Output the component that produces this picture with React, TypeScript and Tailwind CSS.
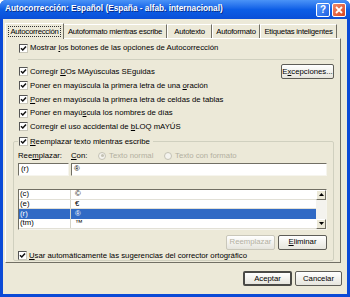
import React from 'react';

const font = "font-['Liberation_Sans',Arial,sans-serif]";

function Check({ checked = true }: { checked?: boolean }) {
  return (
    <span className="w-[9px] h-[9px] shrink-0 bg-white border border-t-[#555] border-l-[#555] border-b-[#c9c7ba] border-r-[#c9c7ba] flex items-center justify-center">
      {checked && (
        <svg width="7" height="7" viewBox="0 0 7 7">
          <path d="M1 3.2 L2.8 5 L6 1.5" stroke="#111" strokeWidth="1.5" fill="none" />
        </svg>
      )}
    </span>
  );
}

function Radio({ on = false }: { on?: boolean }) {
  return (
    <span className="w-[8px] h-[8px] shrink-0 rounded-full border border-[#c4c2b4] bg-[#f4f3ee] flex items-center justify-center">
      {on && <span className="w-[3px] h-[3px] rounded-full bg-[#c4c2b4]" />}
    </span>
  );
}

function CheckRow({ children, h = 'h-[13.75px]' }: { children: React.ReactNode; h?: string }) {
  return (
    <div className={`flex items-center gap-[2px] ${h}`}>
      <Check />
      <span className="leading-none">{children}</span>
    </div>
  );
}

function Btn({ children, w, disabled, isDefault }: { children: React.ReactNode; w: string; disabled?: boolean; isDefault?: boolean }) {
  return (
    <div
      className={`${w} h-[15px] rounded-[2px] flex items-center justify-center leading-none bg-gradient-to-b from-white to-[#e6e5dd] ${
        isDefault ? 'border-2 border-[#4a4a46]' : 'border border-[#5e5d57]'
      } ${disabled ? 'text-[#b3b0a1] border-[#c9c7ba]' : 'text-black'}`}
    >
      {children}
    </div>
  );
}

const rows = [
  { a: '(c)', b: '©' },
  { a: '(e)', b: '€' },
  { a: '(r)', b: '®', sel: true },
  { a: '(tm)', b: '™' },
];

export default function App() {
  return (
    <div className={`w-[350px] h-[297px] bg-[#0b4ad6] rounded-t-[6px] flex flex-col overflow-hidden ${font} text-[7.75px] text-black`}>
      {/* title bar */}
      <div className="h-[19px] shrink-0 flex items-center pl-[5px] pr-[4px] bg-gradient-to-b from-[#4a93f7] via-[#0d5ee6] to-[#0a4fd8]">
        <span className="flex-1 text-white font-bold text-[8.25px] [text-shadow:1px_1px_0_#0a2f8c]">
          Autocorrección: Español (España - alfab. internacional)
        </span>
        <div className="flex gap-[2px]">
          <div className="w-[14px] h-[14px] rounded-[2px] border border-white bg-gradient-to-br from-[#5b9cff] to-[#1f5fe0] text-white text-[10px] font-bold flex items-center justify-center leading-none">
            ?
          </div>
          <div className="w-[14px] h-[14px] rounded-[2px] border border-white bg-gradient-to-br from-[#f08a6a] to-[#d6431f] flex items-center justify-center">
            <svg width="8" height="8" viewBox="0 0 8 8">
              <path d="M1 1 L7 7 M7 1 L1 7" stroke="white" strokeWidth="1.8" />
            </svg>
          </div>
        </div>
      </div>

      {/* body */}
      <div className="flex-1 mx-[3px] mb-[3px] bg-[#ece9d8] flex flex-col pl-[2px]">
        {/* tabs */}
        <div className="h-[19px] flex items-end pt-[3px] tracking-[-0.25px]">
          <div className="h-[16px] w-[59px] flex items-center justify-center border-t border-l border-white border-r border-r-[#716f64] bg-[#ece9d8] relative z-10 -mb-[1px]">
            <span className="px-[1px] outline outline-1 outline-dotted outline-[#333] leading-none py-[1px]">Autocorrección</span>
          </div>
          <div className="h-[14px] w-[103px] flex items-center justify-center border-t border-white border-r border-r-[#716f64] whitespace-nowrap">
            Autoformato mientras escribe
          </div>
          <div className="h-[14px] w-[45px] flex items-center justify-center border-t border-l border-white border-r border-r-[#716f64]">
            Autotexto
          </div>
          <div className="h-[14px] w-[48px] flex items-center justify-center border-t border-l border-white border-r border-r-[#716f64]">
            Autoformato
          </div>
          <div className="h-[14px] w-[77px] flex items-center justify-center border-t border-l border-white border-r border-r-[#716f64] whitespace-nowrap">
            Etiquetas inteligentes
          </div>
        </div>

        {/* panel */}
        <div className="w-[336px] h-[225px] border border-t-white border-l-white border-r-[#716f64] border-b-[#716f64] flex flex-col pl-[13px] pr-[5px] pt-[2px]">
          <CheckRow h="h-[14px]">
            Mostrar <u>l</u>os botones de las opciones de Autocorrección
          </CheckRow>
          <div className="mt-[4px] -ml-[1px] mr-[1px] border-t border-[#d0d0bf]" />
          <div className="mt-[5px] flex items-center justify-between h-[13.75px] pr-[1px]">
            <div className="flex items-center gap-[2px]">
              <Check />
              <span className="leading-none">
                Corregir <u>D</u>Os MAyúsculas SEguidas
              </span>
            </div>
            <Btn w="w-[53px]">
              E<u>x</u>cepciones...
            </Btn>
          </div>
          <CheckRow>
            Poner en mayúscula la primera letra de una <u>o</u>ración
          </CheckRow>
          <CheckRow>
            <u>P</u>oner en mayúscula la primera letra de celdas de tablas
          </CheckRow>
          <CheckRow>
            Poner en mayú<u>s</u>cula los nombres de días
          </CheckRow>
          <CheckRow>
            Corregir el uso accidental de <u>b</u>LOQ mAYÚS
          </CheckRow>

          <fieldset className="mt-[3px] -ml-[6px] mr-[1px] h-[124px] border border-[#d0d0bf] pl-[4px] pr-[6px] rounded-[2px]">
            <legend className="pl-[1px] pr-[3px]">
              <span className="flex items-center gap-[2px] h-[10px]">
                <Check />
                <span className="leading-none">
                  <u>R</u>eemplazar texto mientras escribe
                </span>
              </span>
            </legend>
            <div className="mt-[4px] h-[10px] flex items-center">
              <span className="w-[53px] leading-none">
                Ree<u>m</u>plazar:
              </span>
              <span className="w-[27px] leading-none">
                <u>C</u>on:
              </span>
              <span className="w-[66px] flex items-center gap-[3px] text-[#b3b0a1] leading-none">
                <Radio on /> Texto normal
              </span>
              <span className="flex items-center gap-[3px] text-[#b3b0a1] leading-none">
                <Radio /> Texto con formato
              </span>
            </div>
            <div className="mt-[2px] h-[13px] flex gap-[2px]">
              <div className="w-[51px] h-full bg-white border border-t-[#716f64] border-l-[#716f64] border-b-[#f6f5ee] border-r-[#f6f5ee] flex items-center pl-[2px] leading-none">
                (r)
              </div>
              <div className="flex-1 h-full bg-white border border-t-[#716f64] border-l-[#716f64] border-b-[#f6f5ee] border-r-[#f6f5ee] flex items-center pl-[2px] leading-none">
                ®
              </div>
            </div>
            <div className="mt-[13px] h-[41px] flex bg-white border border-t-[#716f64] border-l-[#716f64] border-b-[#f6f5ee] border-r-[#f6f5ee]">
              <div className="flex-1 flex flex-col">
                {rows.map((r) => (
                  <div
                    key={r.a}
                    className={`h-[10px] grid grid-cols-[52px_1fr] leading-none ${r.sel ? 'bg-[#316ac5] text-white' : 'border-b border-[#e2e0d6]'}`}
                  >
                    <span className="flex items-center pl-[1px] border-r border-[#d6d4c8]">{r.a}</span>
                    <span className="flex items-center pl-[4px]">{r.b}</span>
                  </div>
                ))}
              </div>
              <div className="w-[10px] flex flex-col bg-[#f4f3ee]">
                <div className="h-[10px] bg-[#ece9d8] border border-t-white border-l-white border-r-[#716f64] border-b-[#716f64] flex items-center justify-center">
                  <svg width="5" height="3" viewBox="0 0 5 3">
                    <path d="M2.5 0 L5 3 L0 3 Z" fill="#000" />
                  </svg>
                </div>
                <div className="flex-1" />
                <div className="h-[10px] bg-[#ece9d8] border border-t-white border-l-white border-r-[#716f64] border-b-[#716f64] flex items-center justify-center">
                  <svg width="5" height="3" viewBox="0 0 5 3">
                    <path d="M0 0 L5 0 L2.5 3 Z" fill="#000" />
                  </svg>
                </div>
              </div>
            </div>
            <div className="mt-[5px] flex justify-end gap-[3px]">
              <Btn w="w-[49px]" disabled>
                Reemplazar
              </Btn>
              <Btn w="w-[49px]">
                <u>E</u>liminar
              </Btn>
            </div>
            <div className="mt-[1px] flex items-center gap-[2px] h-[10px]">
              <Check />
              <span className="leading-none">
                <u>U</u>sar automáticamente las sugerencias del corrector ortográfico
              </span>
            </div>
          </fieldset>
        </div>

        {/* footer */}
        <div className="flex-1 flex items-center justify-end gap-[3px] pr-[5px]">
          <Btn w="w-[49px]" isDefault>
            Aceptar
          </Btn>
          <Btn w="w-[47px]">Cancelar</Btn>
        </div>
      </div>
    </div>
  );
}
